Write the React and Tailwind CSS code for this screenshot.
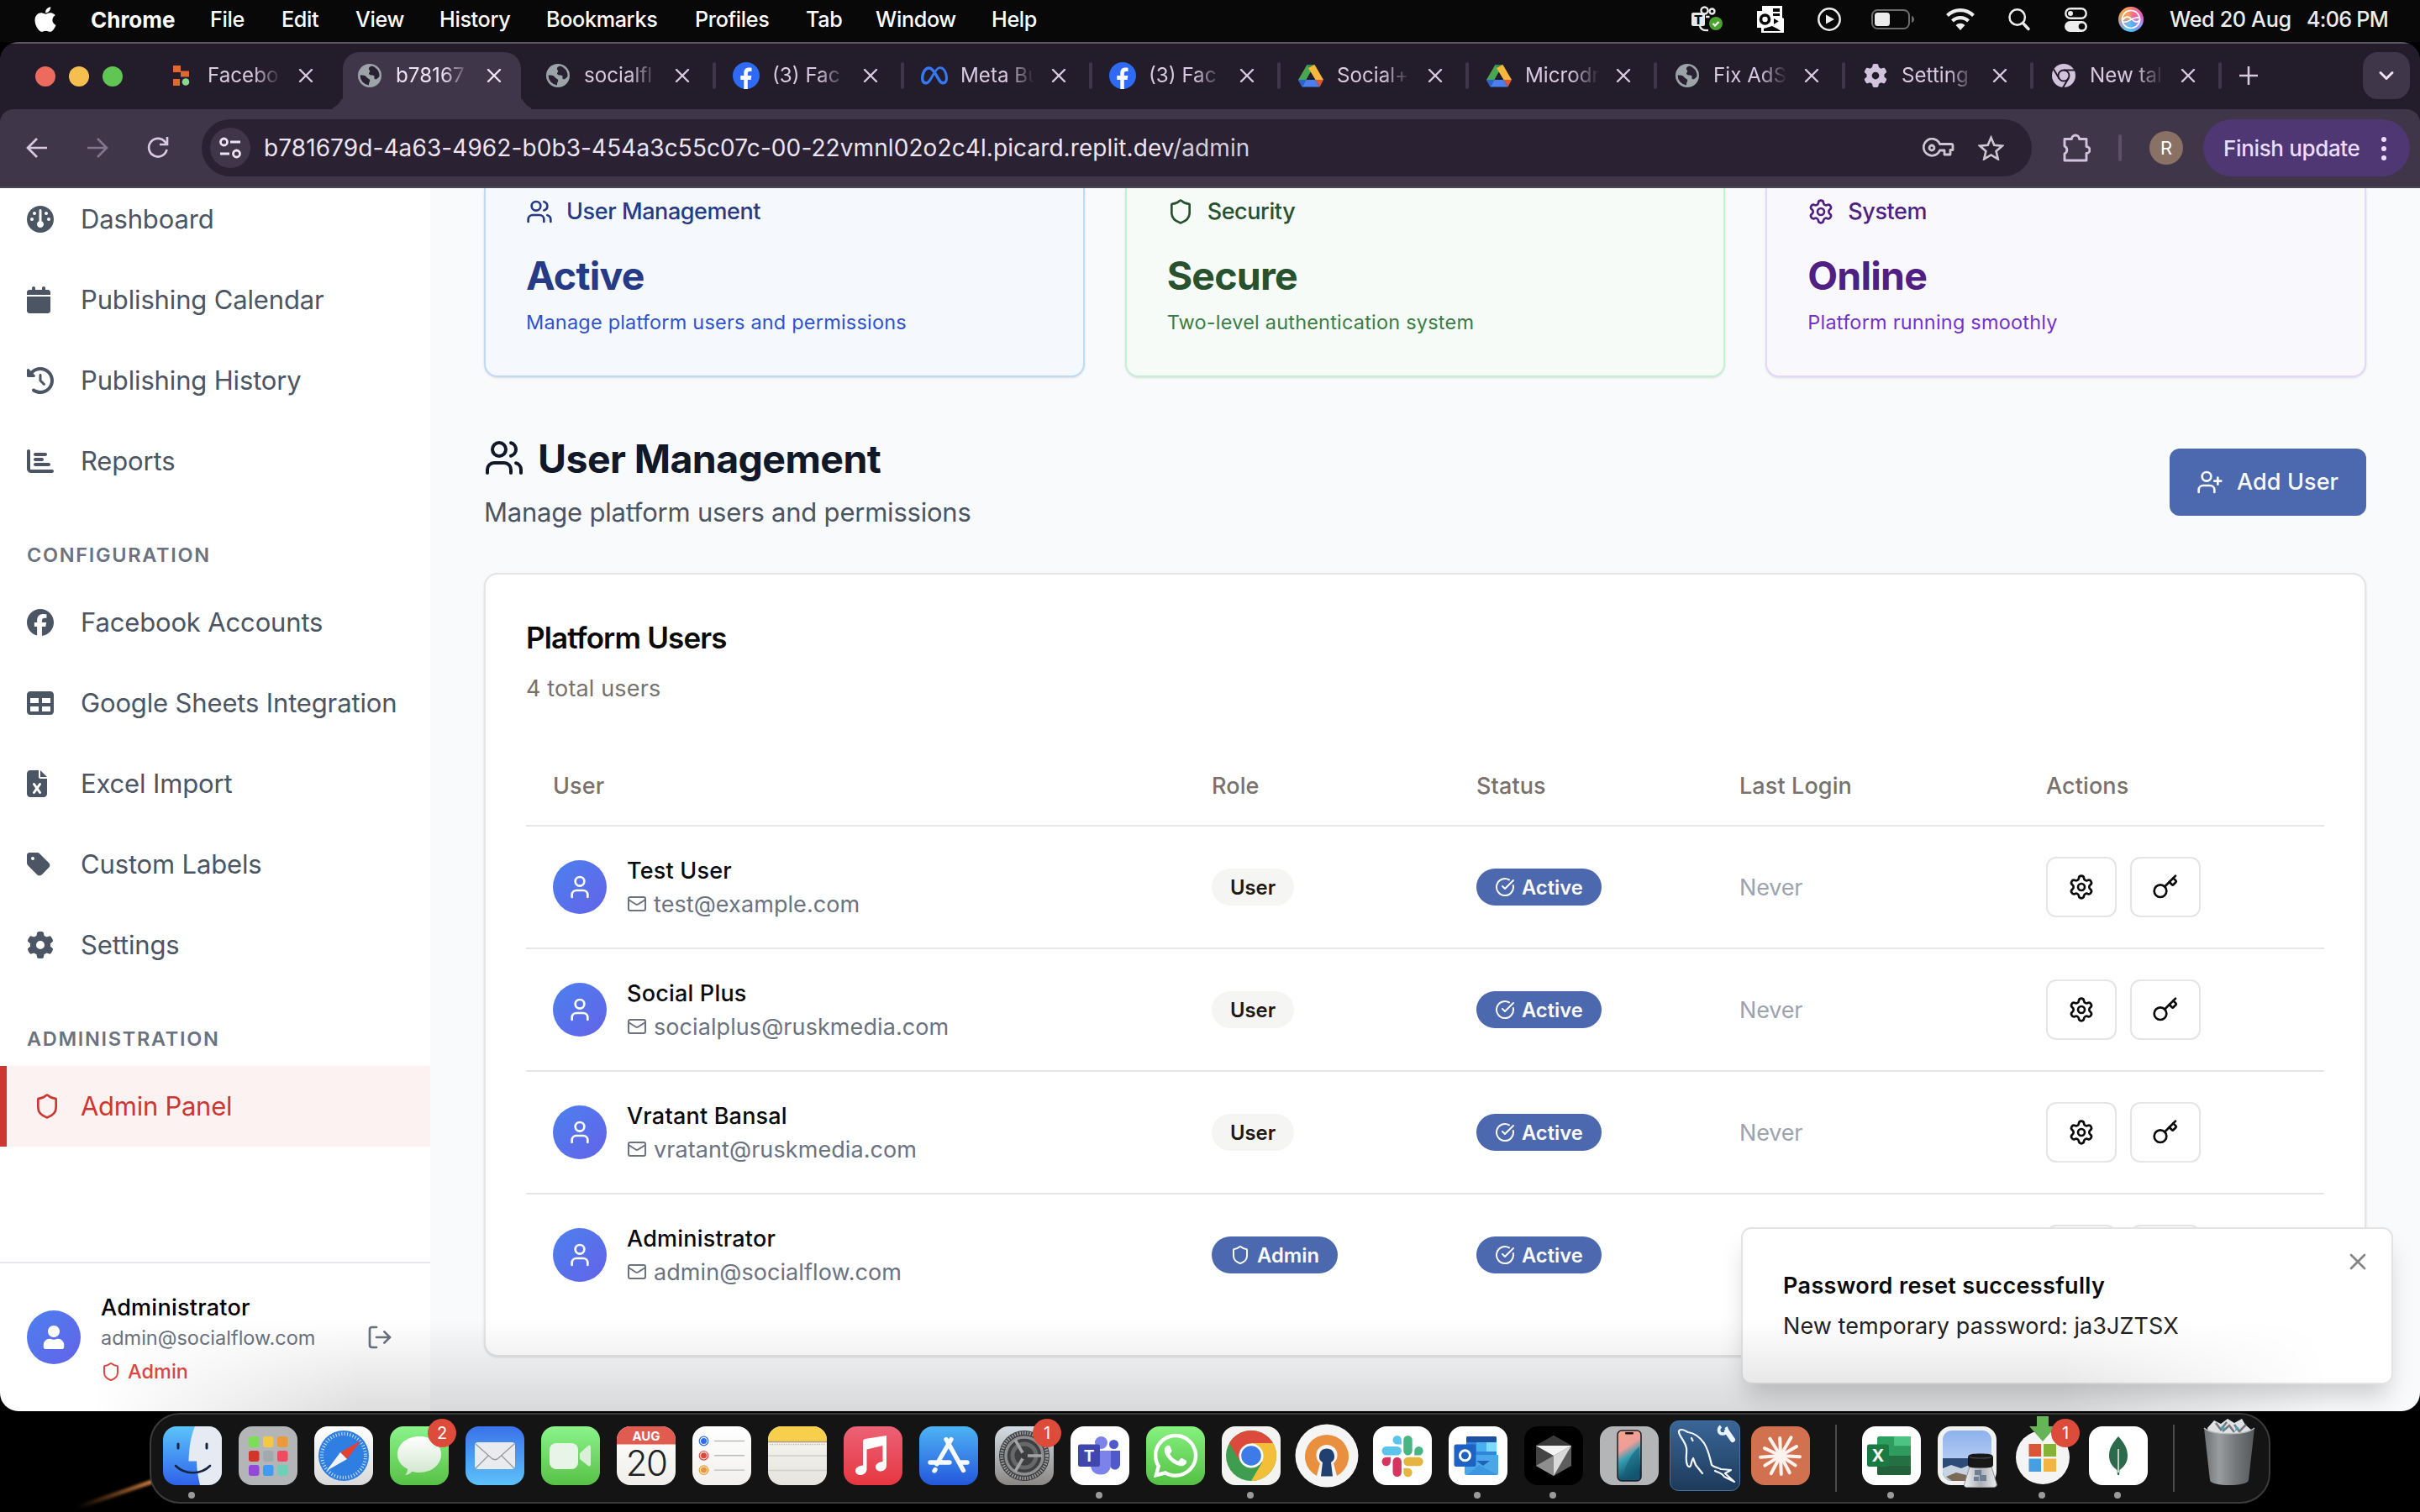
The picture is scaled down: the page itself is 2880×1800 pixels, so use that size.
import React from "react";
import { Users, Shield, Settings, UserPlus, User, Mail, CircleCheckBig, Key, LogOut, X, ChevronDown } from "lucide-react";
import { FaApple, FaGauge, FaCalendar, FaClockRotateLeft, FaChartBar, FaFacebook, FaTable, FaFileExcel, FaTag, FaGear, FaMeta } from "react-icons/fa6";
import { FaUser, FaWhatsapp } from "react-icons/fa";

/* ---------- menu bar ---------- */

const menus = [
  ["File", "w-[85px]"],
  ["Edit", "w-[88px]"],
  ["View", "w-[100px]"],
  ["History", "w-[127px]"],
  ["Bookmarks", "w-[177px]"],
  ["Profiles", "w-[132px]"],
  ["Tab", "w-[83px]"],
  ["Window", "w-[138px]"],
  ["Help", "w-[60px]"],
];

function MenuBar() {
  return (
    <header className="flex h-[50px] shrink-0 items-center bg-[#080808] pb-[3px] text-[25.2px] font-medium tracking-[-0.35px] text-white">
      <FaApple className="ml-[38px] mb-[2px] h-[34px] w-[32px]" />
      <span className="ml-[38px] w-[142px] text-[26px] font-bold tracking-normal">Chrome</span>
      {menus.map(([m, w]) => (
        <span key={m} className={`shrink-0 ${w}`}>{m}</span>
      ))}
      <div className="ml-auto flex items-center text-[#ececec]">
        <svg width="38" height="34" viewBox="0 0 38 34" className="mt-[2px]">
          <g fill="none" stroke="#e8e8e8" strokeWidth="2.4">
            <circle cx="15.5" cy="5.5" r="4" />
            <circle cx="24.5" cy="6.5" r="3" />
            <path d="M17 13h4.500M10 24c1 4 5 5.500 10 5" />
          </g>
          <rect y="8" width="16" height="16" rx="2" fill="#e8e8e8" />
          <text x="8" y="21.500" textAnchor="middle" fontSize="15" fontWeight="800" fill="#080808" fontFamily="Inter, sans-serif">T</text>
          <circle cx="29" cy="21" r="8" fill="#4aa22f" />
          <path d="M25.500 21l2.500 2.500 4.500-4.500" fill="none" stroke="#fff" strokeWidth="2.200" />
        </svg>
        <svg width="32" height="34" viewBox="0 0 32 34" className="ml-[40px]">
          <path d="M6 1h24v14l2 1v17H5V27H0V7h6z" fill="#fff" />
          <path d="M19 4h8v9h-8zM20 16l7 4-7 5zM8 28l10-3 12 6H8z" fill="#080808" />
          <path d="M19 9h9M20 24l11-7M21 24l10 8" stroke="#fff" strokeWidth="1.800" />
          <circle cx="9.500" cy="17" r="5" fill="none" stroke="#080808" strokeWidth="3.600" />
        </svg>
        <svg width="28" height="30" viewBox="0 0 28 30" className="ml-[40px]">
          <circle cx="14" cy="15" r="12.700" fill="none" stroke="#ececec" strokeWidth="2.500" />
          <path d="M10 9.500v11l10-5.500z" fill="#ececec" />
        </svg>
        <svg width="52" height="26" viewBox="0 0 52 26" className="ml-[36px]">
          <rect x="1" y="2" width="44" height="22" rx="6.500" fill="none" stroke="#6c6c6c" strokeWidth="2" />
          <rect x="4" y="5" width="18" height="16" rx="3.500" fill="#ececec" />
          <path d="M48 9c4 1 4 7 0 8z" fill="#6c6c6c" />
        </svg>
        <svg width="34" height="27" viewBox="0 0 34 27" className="ml-[37px]">
          <path d="M1.500 8.500a22 22 0 0 1 31 0M7.500 15a13.500 13.500 0 0 1 19 0" fill="none" stroke="#ececec" strokeWidth="4.200" />
          <path d="M11.500 20a8 8 0 0 1 11 0L17 26z" fill="#ececec" />
        </svg>
        <svg width="26" height="28" viewBox="0 0 26 28" className="ml-[40px]">
          <circle cx="10.700" cy="11.500" r="9.200" fill="none" stroke="#ececec" strokeWidth="2.500" />
          <path d="M17.500 18.500l6.500 7" stroke="#ececec" strokeWidth="3.400" strokeLinecap="round" />
        </svg>
        <svg width="27" height="30" viewBox="0 0 27 30" className="ml-[41px]">
          <rect x="1.300" y="2.300" width="24.400" height="11.400" rx="5.700" fill="none" stroke="#ececec" strokeWidth="2.400" />
          <circle cx="7" cy="8" r="3" fill="#ececec" />
          <rect x="0" y="17" width="27" height="13" rx="6.500" fill="#ececec" />
          <circle cx="20.500" cy="23.500" r="3.800" fill="#080808" />
        </svg>
        <div className="ml-[37px] flex size-[30px] items-center justify-center rounded-full bg-[conic-gradient(from_20deg,#f4708a,#e85cb0,#b48af8,#5aa8f5,#63c4f0,#a0a0c0,#f0a050,#f4a060,#f4708a)]">
          <svg width="26" height="26" viewBox="0 0 26 26" fill="none" stroke="#fff" strokeWidth="1.700">
            <circle cx="13" cy="13" r="10.500" />
            <path d="M3 14c4-6 8-4 11-1s7 5 10 0M4 16c6 2 9-6 19-5" />
          </svg>
        </div>
        <span className="ml-[31px] w-[163px]">Wed 20 Aug</span>
        <span className="mr-[37px] w-[98px] whitespace-nowrap tracking-[-0.75px]">4:06 PM</span>
      </div>
    </header>
  );
}

/* ---------- browser tabs ---------- */

function Globe() {
  return (
    <svg width="28" height="28" viewBox="0 0 28 28">
      <circle cx="14" cy="14" r="14" fill="#9ca3a9" />
      <path d="M15 3c-2 1-3 3-1 5 1 1.500-1 2-1 3.500s2 2 4 2 3 1 2.500 3 2 2.500 3.500 1c1-1 2-1.500 2.500-3a12 12 0 0 0-5-10C19 3 17 2.500 15 3zM2.500 13.500c3 0 6 0 7.500 2s3 2 4 3.500-1 3-1 4.500v2A12 12 0 0 1 2.500 13.500z" fill="#282131" />
    </svg>
  );
}
function Drive() {
  return (
    <svg width="30" height="27" viewBox="0 0 30 27">
      <path d="M10.500 0h9L10 17l-5.500 9L0 18z" fill="#4aa653" />
      <path d="M10.500 0h9L15 8z" fill="#2f8a45" />
      <path d="M19.500 0L30 18h-9.500L12 4z" fill="#f5b83d" />
      <path d="M9.500 18h11l5 8.500h-21z" fill="#4a80ee" />
      <path d="M0 18h9.500l-5 8.500z" fill="#2c62d6" />
      <path d="M20.500 18H30l-4.500 8.500z" fill="#e2553d" />
    </svg>
  );
}
function FacebookMark() {
  return (
    <svg width="32" height="32" viewBox="0 0 32 32">
      <circle cx="16" cy="16" r="16" fill="#2f6af5" />
      <path d="M13.300 32V21h-4v-5h4v-3c0-4.500 2.500-6.500 6-6.500 1.500 0 2.700.2 3.200.3v4.300h-2.200c-2 0-2.500 1-2.500 2.600V16h4.600l-.8 5h-3.800v11z" fill="#fff" />
    </svg>
  );
}
function ReplitMark() {
  return (
    <svg width="22" height="26" viewBox="0 0 22 26">
      <path d="M1 1h9v8H1zM10 7.500h10v7H10zM1 17h8v8H1z" fill="#e2682f" />
      <circle cx="16" cy="20.500" r="4.300" fill="#86d98f" />
    </svg>
  );
}
function ChromeMono() {
  return (
    <svg width="28" height="28" viewBox="0 0 28 28">
      <circle cx="14" cy="14" r="14" fill="#d0c3db" />
      <g fill="none" stroke="#231c2b" strokeWidth="2">
        <circle cx="14" cy="14" r="6.500" />
        <path d="M14 7.500h13M8.400 17.300L2 6.500M19.600 17.300L13 28.500" />
      </g>
    </svg>
  );
}
function GearMono() {
  return <FaGear className="size-[28px] text-[#d0c3db]" />;
}

const tabs = [
  ["Facebo", <ReplitMark />],
  ["b78167", <Globe />],
  ["socialfl", <Globe />],
  ["(3) Fac", <FacebookMark />],
  ["Meta Bu", <FaMeta className="size-[32px] text-[#3578f6]" />],
  ["(3) Fac", <FacebookMark />],
  ["Social+", <Drive />],
  ["Microdr", <Drive />],
  ["Fix AdS", <Globe />],
  ["Setting", <GearMono />],
  ["New tal", <ChromeMono />],
];

function TabStrip() {
  return (
    <div className="flex h-[80px] shrink-0 border-t-2 border-[#5b565f] bg-[#231c2b]">
      <div className="flex w-[178px] items-center gap-[16px] pl-[42px]">
        <span className="size-[24px] rounded-full bg-[#ec6a5e]" />
        <span className="size-[24px] rounded-full bg-[#f4bf4f]" />
        <span className="size-[24px] rounded-full bg-[#61c554]" />
      </div>
      {tabs.map(([title, icon], i) => {
        const active = i === 1;
        return (
          <div key={i} className="relative flex w-[224px] pt-[10px]">
            <div className={`relative ml-[6px] flex w-[212px] items-center rounded-t-[20px] pb-[12px] ${active ? "bg-[#403649]" : ""}`}>
              {active && (
                <>
                  <span className="absolute bottom-0 -left-[20px] size-[20px] rounded-br-[20px] shadow-[8px_8px_0_0_#403649] [clip-path:inset(0)]" />
                  <span className="absolute bottom-0 -right-[20px] size-[20px] rounded-bl-[20px] shadow-[-8px_8px_0_0_#403649] [clip-path:inset(0)]" />
                </>
              )}
              <span className="ml-[14px] flex w-[36px] shrink-0 items-center justify-center">{icon}</span>
              <span className={`ml-[13px] w-[92px] shrink-0 text-[24.2px] whitespace-nowrap [mask-image:linear-gradient(to_right,black_60%,transparent_96%)] ${active ? "text-[#ece4f2]" : "text-[#d6c9e0]"}`}>{title}</span>
              <X className={`ml-[11px] size-[28px] shrink-0 ${active ? "text-[#ece4f2]" : "text-[#d6c9e0]"}`} strokeWidth={2.1} />
            </div>
            {i >= 2 && <span className="absolute top-[22px] -right-[2px] h-[32px] w-[4px] rounded-full bg-[#40364a]" />}
          </div>
        );
      })}
      <svg className="mt-[26px] ml-[22px]" width="24" height="24" viewBox="0 0 24 24" stroke="#d6c9e0" strokeWidth="2.600">
        <path d="M12 1v22M1 12h22" />
      </svg>
      <span className="mt-[10px] mr-[12px] ml-auto flex h-[56px] w-[56px] items-center justify-center rounded-[18px] bg-[#403649] text-[#ece4f2]">
        <ChevronDown className="size-[28px]" strokeWidth={2.6} />
      </span>
    </div>
  );
}

/* ---------- address bar ---------- */

function Toolbar() {
  return (
    <div className="flex h-[94px] shrink-0 items-center rounded-t-[16px] border-b-2 border-[#4a4650] bg-[#403649] text-[#d6c9e0]">
      <svg className="ml-[31px]" width="26" height="26" viewBox="0 0 26 26" fill="none" stroke="currentColor" strokeWidth="2.700">
        <path d="M25 13H3M13 2L2 13l11 11" />
      </svg>
      <svg className="ml-[46px] text-[#81768c]" width="26" height="26" viewBox="0 0 26 26" fill="none" stroke="currentColor" strokeWidth="2.700">
        <path d="M1 13h22M13 2l11 11-11 11" />
      </svg>
      <svg className="ml-[46px]" width="26" height="26" viewBox="0 0 26 26" fill="none" stroke="currentColor" strokeWidth="2.700">
        <path d="M23.500 15A10.800 10.800 0 1 1 21 5.500l2 2.500M24 0v9h-9" />
      </svg>
      <div className="ml-[39px] flex h-[68px] w-[2178px] items-center rounded-full bg-[#2a2133]">
        <span className="ml-[10px] flex size-[48px] items-center justify-center rounded-full bg-[#403649]">
          <svg width="26" height="26" viewBox="0 0 26 26" fill="none" stroke="#ece4f2" strokeWidth="2.800">
            <circle cx="5.500" cy="6" r="4" />
            <path d="M13 6h12M1 20h11" />
            <circle cx="20.500" cy="20" r="4" />
          </svg>
        </span>
        <span className="ml-[16px] text-[28px] tracking-[0.09px] whitespace-nowrap text-[#ece4f2]">
          b781679d-4a63-4962-b0b3-454a3c55c07c-00-22vmnl02o2c4l.picard.replit.dev<span className="text-[#d6cdda]">/admin</span>
        </span>
        <svg className="ml-auto" width="38" height="24" viewBox="0 0 38 24" fill="none" stroke="#cdc6d1" strokeWidth="2.800" strokeLinejoin="round">
          <path d="M20.500 7.500H34a2 2 0 0 1 2 2v5h-3v5.500h-7V15h-5.500A10 10 0 1 1 20.500 7.500z" />
          <circle cx="11" cy="12" r="3" />
        </svg>
        <svg className="mr-[33px] ml-[28px]" width="31" height="30" viewBox="0 0 31 30" fill="none" stroke="#cdc6d1" strokeWidth="2.600">
          <path d="M15.500 2.800l3.800 8.900 9.600.9-7.300 6.400 2.200 9.400-8.300-5-8.300 5 2.200-9.400-7.300-6.400 9.600-.9z" />
        </svg>
      </div>
      <svg className="ml-[36px]" width="34" height="34" viewBox="0 0 34 34" fill="none" stroke="#d0c3db" strokeWidth="2.900" strokeLinejoin="round">
        <path d="M3 6.500h8.500a4.500 4.500 0 0 1 9 0H29v9a4 4 0 0 1 0 8v8.500H3v-8a5 5 0 0 0 0-9z" />
      </svg>
      <span className="ml-[33px] h-[32px] w-[4px] rounded-full bg-[#5b5065]" />
      <span className="ml-[33px] flex size-[40px] items-center justify-center rounded-full bg-[#8a7165] text-[22px] text-white">R</span>
      <span className="ml-[24px] flex h-[68px] w-[246px] items-center rounded-full bg-[#4f3773] pl-[24px] text-[26px] font-medium tracking-[-0.35px] whitespace-nowrap text-[#ecdcff]">
        Finish update
        <span className="mt-[1px] ml-auto mr-[28px] flex flex-col gap-[5px]">
          <i className="size-[6px] rounded-full bg-[#ecdcff]" />
          <i className="size-[6px] rounded-full bg-[#ecdcff]" />
          <i className="size-[6px] rounded-full bg-[#ecdcff]" />
        </span>
      </span>
    </div>
  );
}

/* ---------- sidebar ---------- */

function NavItem({ icon: Icon, label }) {
  return (
    <a className="flex h-[96px] items-center pl-[32px] text-[31px] tracking-[-0.15px] text-[#4b5563]">
      <Icon className="mr-[32px] size-[32px]" preserveAspectRatio="xMinYMid meet" />
      {label}
    </a>
  );
}
function NavHeading({ children }) {
  return <h3 className="mt-[48px] mb-[16px] pl-[32px] text-[23.500px] leading-[32px] font-semibold tracking-[1.7px] text-[#6b7280]">{children}</h3>;
}

function Sidebar() {
  return (
    <aside className="flex w-[512px] shrink-0 flex-col bg-white">
      <nav className="-mt-[11px]">
        <NavItem icon={FaGauge} label="Dashboard" />
        <NavItem icon={FaCalendar} label="Publishing Calendar" />
        <NavItem icon={FaClockRotateLeft} label="Publishing History" />
        <NavItem icon={FaChartBar} label="Reports" />
        <NavHeading>CONFIGURATION</NavHeading>
        <NavItem icon={FaFacebook} label="Facebook Accounts" />
        <NavItem icon={FaTable} label="Google Sheets Integration" />
        <NavItem icon={FaFileExcel} label="Excel Import" />
        <NavItem icon={FaTag} label="Custom Labels" />
        <NavItem icon={FaGear} label="Settings" />
        <NavHeading>ADMINISTRATION</NavHeading>
        <a className="flex h-[96px] items-center border-l-8 border-[#cc3731] bg-[#fcf2f1] pl-[32px] text-[31px] tracking-[-0.27px] text-[#cc3731]">
          <Shield className="mr-[24px] size-[32px]" />
          Admin Panel
        </a>
      </nav>
      <div className="mt-auto flex h-[178px] items-center border-t-2 border-[#e5e7eb] pl-[32px]">
        <span className="flex size-[64px] items-center justify-center rounded-full bg-linear-to-br from-[#4a80ee] to-[#6262e8] text-white">
          <FaUser className="h-[28px] w-auto" />
        </span>
        <div className="mt-[2px] ml-[24px] w-[290px]">
          <div className="text-[27px] leading-[40px] font-medium tracking-[0.25px] text-black">Administrator</div>
          <div className="text-[23.500px] leading-[32px] text-[#6b7280]">admin@socialflow.com</div>
          <div className="mt-[8px] flex items-center text-[23.500px] leading-[32px] font-medium text-[#dc4a44]">
            <Shield className="mr-[8px] size-[24px]" />
            Admin
          </div>
        </div>
        <LogOut className="ml-[26px] size-[32px] text-[#6b7280]" />
      </div>
    </aside>
  );
}

/* ---------- main panel ---------- */

const stats = [
  { icon: Users, label: "User Management", value: "Active", note: "Manage platform users and permissions", card: "border-[#bfd9fb] bg-[#f5f9fe]", head: "text-[#273a86]", text: "text-[#2f52d0]" },
  { icon: Shield, label: "Security", value: "Secure", note: "Two-level authentication system", card: "border-[#c3f3d0] bg-[#f6fbf8]", head: "text-[#28522f]", text: "text-[#3b7d45]" },
  { icon: Settings, label: "System", value: "Online", note: "Platform running smoothly", card: "border-[#e5d6fb] bg-[#f9f9fd]", head: "text-[#501f83]", text: "text-[#7531cc]" },
];

const rows = [
  ["Test User", "test@example.com", false],
  ["Social Plus", "socialplus@ruskmedia.com", false],
  ["Vratant Bansal", "vratant@ruskmedia.com", false],
  ["Administrator", "admin@socialflow.com", true],
];

const columns = "grid grid-cols-[784px_315px_313px_365px_331px] items-center pl-[32px]";

function ActionButton({ icon: Icon }) {
  return (
    <button className="flex h-[72px] w-[84px] items-center justify-center rounded-[12px] border-2 border-[#e5e5e5] bg-white text-[#0a0a0a]">
      <Icon className="size-[32px]" />
    </button>
  );
}

function Main() {
  return (
    <main className="flex-1 bg-[#f9fafc] px-[64px]">
      <section className="grid grid-cols-3 gap-[48px]">
        {stats.map(({ icon: Icon, ...s }) => (
          <div key={s.label} className={`rounded-b-[16px] border-2 border-t-0 px-[48px] pt-[12px] pb-[47px] shadow-sm ${s.card}`}>
            <div className={`flex h-[32px] items-center gap-[16px] text-[27px] font-medium tracking-[-0.42px] ${s.head}`}>
              <Icon className="size-[32px]" />
              {s.label}
            </div>
            <div className={`mt-[28px] text-[46.500px] leading-[64px] font-bold tracking-[-0.8px] ${s.head}`}>{s.value}</div>
            <div className={`mt-[8px] text-[23.500px] leading-[32px] tracking-[0.2px] ${s.text}`}>{s.note}</div>
          </div>
        ))}
      </section>

      <section className="mt-[64px] flex items-center justify-between">
        <div className="pt-[1px]">
          <h2 className="flex items-center gap-[16px] text-[46.500px] leading-[64px] font-bold tracking-[-0.6px] text-[#111827]">
            <Users className="mb-[2px] size-[48px]" strokeWidth={2} />
            User Management
          </h2>
          <p className="mt-[8px] text-[31px] leading-[48px] tracking-[-0.22px] text-[#4b5563]">Manage platform users and permissions</p>
        </div>
        <button className="flex h-[80px] w-[234px] items-center rounded-[12px] bg-[#4c68af] pl-[32px] text-[27px] font-medium tracking-[0.1px] text-[#fafafa]">
          <UserPlus className="mr-[16px] size-[32px]" />
          <span className="mt-[1px]">Add User</span>
        </button>
      </section>

      <section className="mt-[48px] h-[933px] rounded-[16px] border-2 border-[#e6e4e4] bg-white px-[48px] pt-[47px] shadow-sm">
        <h3 className="text-[35px] leading-[56px] font-semibold tracking-[-0.85px] text-[#0c0a09]">Platform Users</h3>
        <p className="mt-[13px] text-[27px] leading-[40px] tracking-[0.15px] text-[#78716c]">4 total users</p>
        <div className="mt-[48px]">
          <div className={`h-[96px] border-b-2 border-[#e5e5e5] pt-[2px] text-[27px] font-medium tracking-[0.1px] text-[#78716c] ${columns}`}>
            <span>User</span>
            <span>Role</span>
            <span>Status</span>
            <span>Last Login</span>
            <span>Actions</span>
          </div>
          {rows.map(([name, email, admin]) => (
            <div key={name} className={`h-[146px] border-b-2 border-[#e5e5e5] last:h-[144px] last:border-b-0 ${columns}`}>
              <div className="flex items-center">
                <span className="flex size-[64px] items-center justify-center rounded-full bg-linear-to-br from-[#4a80ee] to-[#6262e8] text-white">
                  <User className="size-[32px]" />
                </span>
                <div className="mt-[2px] ml-[24px]">
                  <div className="text-[27px] leading-[40px] font-medium tracking-[0.2px] text-[#0a0a0a]">{name}</div>
                  <div className="flex items-center gap-[8px] text-[27px] leading-[40px] tracking-[0.08px] text-[#6b7280]">
                    <Mail className="mb-[2px] size-[24px]" />
                    {email}
                  </div>
                </div>
              </div>
              <div className="flex">
                {admin ? (
                  <span className="flex h-[44px] items-center gap-[8px] rounded-full bg-[#4c68af] px-[22px] text-[23.800px] font-semibold text-[#fafafa]">
                    <Shield className="size-[24px]" />
                    <span className="mt-[1px]">Admin</span>
                  </span>
                ) : (
                  <span className="flex h-[44px] items-center rounded-full bg-[#f5f5f4] px-[22px] pt-[1px] text-[23.800px] font-semibold text-[#1c1917]">User</span>
                )}
              </div>
              <div className="flex">
                <span className="flex h-[44px] items-center gap-[8px] rounded-full bg-[#4c68af] px-[22px] text-[23.700px] font-semibold text-[#fafafa]">
                  <CircleCheckBig className="size-[24px]" />
                  <span className="mt-[1px]">Active</span>
                </span>
              </div>
              <span className="mt-[2px] text-[27px] tracking-[-0.15px] text-[#9ca3af]">Never</span>
              <div className="flex gap-[16px]">
                <ActionButton icon={Settings} />
                <ActionButton icon={Key} />
              </div>
            </div>
          ))}
        </div>
      </section>
    </main>
  );
}

function Toast() {
  return (
    <div className="absolute right-[32px] bottom-[32px] h-[187px] w-[776px] rounded-[12px] border-2 border-[#e5e4e3] bg-white pt-[48px] pl-[48px] shadow-[0_20px_30px_-6px_rgba(0,0,0,0.18)]">
      <X className="absolute top-[23px] right-[24px] size-[32px] text-[#858585]" />
      <div className="text-[27px] leading-[40px] font-semibold tracking-[0.35px] text-[#0a0a0a]">Password reset successfully</div>
      <div className="mt-[8px] text-[27px] leading-[40px] tracking-[0.08px] text-[#232323]">New temporary password: ja3JZTSX</div>
    </div>
  );
}

/* ---------- dock ---------- */

function Tile({ fill, stroke, children, id }) {
  return (
    <svg width="70" height="70" viewBox="0 0 70 70" className="overflow-visible">
      {Array.isArray(fill) && (
        <defs>
          <linearGradient id={id} x1="0" y1="0" x2="0" y2="1">
            <stop offset="0" stopColor={fill[0]} />
            <stop offset="1" stopColor={fill[1]} />
          </linearGradient>
          <clipPath id={id + "c"}><rect width="70" height="70" rx="16" /></clipPath>
        </defs>
      )}
      <rect width="70" height="70" rx="16" fill={Array.isArray(fill) ? `url(#${id})` : fill} stroke={stroke} />
      {children}
    </svg>
  );
}

const Finder = () => (
  <Tile id="fd" fill={["#5cc4fa", "#2f62ea"]}>
    <path clipPath="url(#fdc)" d="M38 0h32v70H44c-2-9-4-18-4-28.500h-9.500C31 25 33 12 38 0z" fill="#e6ebf3" />
    <path d="M18 21v5M52 21v5" stroke="#14263f" strokeWidth="3" strokeLinecap="round" />
    <path d="M15 47c11 11 30 11 41 0" fill="none" stroke="#14263f" strokeWidth="2.600" strokeLinecap="round" />
  </Tile>
);
const Launchpad = () => (
  <Tile fill="#b4b5b6">
    {["#7ddc58", "#f4c845", "#ea9a3a", "#d2352c", "#a3a8ac", "#ee4d60", "#9448d8", "#3f9bf4", "#6fd0b8"].map((c, i) => (
      <rect key={i} x={12 + (i % 3) * 17} y={12 + Math.floor(i / 3) * 17} width="12.500" height="13" rx="3" fill={c} />
    ))}
  </Tile>
);
const Safari = () => (
  <Tile id="sf" fill={["#ffffff", "#d9d9d9"]}>
    <circle cx="35" cy="35" r="30" fill="#2f7fe3" />
    <circle cx="35" cy="35" r="26" fill="none" stroke="#d4e8fb" strokeWidth="4" strokeDasharray="1 2.400" />
    <path d="M55.500 17L31 31l8 8z" fill="#e8402e" />
    <path d="M14.500 53L31 31l8 8z" fill="#f3f4f6" />
  </Tile>
);
const Messages = () => (
  <Tile id="ms" fill={["#8bf38b", "#57c146"]}>
    <defs>
      <linearGradient id="msb" x1="0" y1="0" x2="0" y2="1">
        <stop offset="0" stopColor="#ffffff" />
        <stop offset="1" stopColor="#cfe6cb" />
      </linearGradient>
    </defs>
    <path d="M35 12c15 0 26 9.500 26 21.500S50 55 35 55c-3 0-6-.4-8.500-1.200C24 56.500 21.500 58 18 58c2-2 3.200-4.500 3-7.200C13.500 47 9 41 9 33.500 9 21.500 20 12 35 12z" fill="url(#msb)" />
  </Tile>
);
const MailApp = () => (
  <Tile id="ml" fill={["#3a72ea", "#5cc2fa"]}>
    <rect x="11" y="19" width="48" height="32" rx="4" fill="#e9ebee" />
    <path d="M12 21l19 17c3 2.500 5 2.500 8 0l19-17M12 50l15-15M58 50L43 35" fill="none" stroke="#9b9b9b" strokeWidth="1.400" />
  </Tile>
);
const FaceTime = () => (
  <Tile id="ft" fill={["#8bf38b", "#57c146"]}>
    <rect x="10" y="20" width="34" height="31" rx="8" fill="#e9f4e8" />
    <path d="M46 32l10-9c2-1 3 0 3 2v20c0 2-1 3-3 2l-10-8z" fill="#d9efd6" />
  </Tile>
);
const CalendarApp = () => (
  <Tile id="cl" fill={["#ffffff", "#efeeea"]}>
    <path d="M0 21.500V16A16 16 0 0 1 16 0h38a16 16 0 0 1 16 16v5.500z" fill="#e05c50" />
    <text x="35" y="17" textAnchor="middle" fontSize="15" fontWeight="700" fill="#fff" fontFamily="Inter, sans-serif">AUG</text>
    <text x="35" y="59" textAnchor="middle" fontSize="42" fontWeight="300" letterSpacing="-1.500" fill="#222" fontFamily="Inter, sans-serif">20</text>
  </Tile>
);
const Reminders = () => (
  <Tile id="rm" fill={["#ffffff", "#f1f0ee"]}>
    {["#2f6bea", "#e0453a", "#eb9633"].map((c, i) => (
      <g key={c}>
        <circle cx="13.500" cy={17.500 + i * 17.300} r="3.500" fill={c} />
        <circle cx="13.500" cy={17.500 + i * 17.300} r="5.300" fill="none" stroke={c} strokeWidth="1.200" />
        <path d={`M26 ${17.500 + i * 17.300}h36`} stroke="#bcbcbc" strokeWidth="1.400" />
      </g>
    ))}
  </Tile>
);
const Notes = () => (
  <Tile id="nt" fill={["#f8f7f3", "#e6e4dd"]}>
    <path d="M0 18V16A16 16 0 0 1 16 0h38a16 16 0 0 1 16 16v2z" fill="#f7cf4d" />
    <path d="M0 18.500h70" stroke="#a79c80" strokeWidth="1.500" />
    <path d="M2 21.500h66" stroke="#b5b2aa" strokeWidth="1.400" strokeDasharray="1.200 1.600" />
    <path d="M0 35h70M0 52.500h70" stroke="#d2d0ca" strokeWidth="1.600" />
  </Tile>
);
const Music = () => (
  <Tile id="mu" fill={["#ec6276", "#e63640"]}>
    <path d="M51 11v35.500c0 4-3 7-7 7s-6-2.500-6-5c0-3.500 3.500-6 8.500-6.500V23l-19 4.500V51c0 4-3.500 7-7.500 7s-6-2.500-6-5c0-3.500 3.500-6 9-6.500V18c0-1.600.8-2.600 2.500-3z" fill="#fff" />
  </Tile>
);
const AppStore = () => (
  <Tile id="as" fill={["#4db3f4", "#2457dc"]}>
    <g stroke="#f6f9fd" strokeWidth="5.400" strokeLinecap="round">
      <path d="M38 15.500L21 45M32 15.500l20.500 37M18 53l1-1.500M13 43h23M49 43h8" />
    </g>
  </Tile>
);
const SettingsApp = () => (
  <Tile id="st" fill={["#d3dde5", "#8b8784"]}>
    <circle cx="35" cy="35" r="30" fill="#3d3f41" />
    <circle cx="35" cy="35" r="27" fill="none" stroke="#9a9c9e" strokeWidth="4" strokeDasharray="1.600 1.500" />
    <circle cx="35" cy="35" r="22" fill="none" stroke="#8d8f91" strokeWidth="3.500" />
    <circle cx="35" cy="35" r="14" fill="none" stroke="#66686a" strokeWidth="5" />
    <path d="M35 35h21M35 35L24 16M35 35L24 54" stroke="#a2a4a6" strokeWidth="3.500" />
    <circle cx="35" cy="35" r="4" fill="#3a3c3e" />
  </Tile>
);
const Teams = () => (
  <Tile fill="#fff">
    <circle cx="36.500" cy="19.500" r="7.500" fill="#7b83eb" />
    <circle cx="51.500" cy="21.500" r="5.500" fill="#5059c9" />
    <path d="M47 29h12v16c0 4-3 6.500-6 6.500s-6-2-6-6z" fill="#5059c9" />
    <path d="M24 29h24v16c0 8-5 12.500-12 12.500S24 53 24 46z" fill="#7b83eb" />
    <rect x="9" y="21.500" width="26" height="26.500" rx="2.500" fill="#4047ac" />
    <text x="22" y="41.500" textAnchor="middle" fontSize="19" fontWeight="700" fill="#fff" fontFamily="Inter, sans-serif">T</text>
  </Tile>
);
const WhatsApp = () => (
  <Tile id="wa" fill={["#86f27f", "#54c045"]}>
    <FaWhatsapp x="5" y="5" size={60} color="#fff" />
  </Tile>
);
const Chrome = () => (
  <Tile fill="#f3f3f2">
    <circle cx="35" cy="35" r="30" fill="#3f9d4f" />
    <path d="M35 35L9 20a30 30 0 0 1 52 0z" fill="#db4a3b" />
    <path d="M35 20h26a30 30 0 0 1-26 45l13-22z" fill="#f4bf38" />
    <path d="M9 20l13 22.500L35 35z" fill="#db4a3b" />
    <circle cx="35" cy="35" r="14.500" fill="#fff" />
    <circle cx="35" cy="35" r="11.800" fill="#3c7be8" />
  </Tile>
);
const OpenVpn = () => (
  <svg width="76" height="76" viewBox="0 0 76 76">
    <circle cx="38" cy="38" r="37.500" fill="#f5f5f5" />
    <path d="M26 62A26 26 0 1 1 50 62L46 47a12.500 12.500 0 1 0-16 0z" fill="#ea8f3d" />
    <path d="M38 29.500a9 9 0 0 1 5 16.500l2 16.500H31L33 46a9 9 0 0 1 5-16.500z" fill="#213f6f" />
  </svg>
);
const Slack = () => (
  <Tile fill="#fff">
    <g transform="translate(10.500 11) scale(.2)">
      <path d="M52 155a26 26 0 1 1-26-26h26zM65 155a26 26 0 0 1 52 0v64a26 26 0 0 1-52 0z" fill="#d63560" />
      <path d="M91 52a26 26 0 1 1 26-26v26zM91 65a26 26 0 0 1 0 52H26a26 26 0 0 1 0-52z" fill="#5cc3ec" />
      <path d="M194 91a26 26 0 1 1 26 26h-26zM181 91a26 26 0 0 1-52 0V26a26 26 0 0 1 52 0z" fill="#48b583" />
      <path d="M155 194a26 26 0 1 1-26 26v-26zM155 181a26 26 0 0 1 0-52h65a26 26 0 0 1 0 52z" fill="#e6b540" />
    </g>
  </Tile>
);
const Outlook = () => (
  <Tile fill="#fff">
    <rect x="21" y="12" width="36" height="40" rx="2" fill="#2f86d8" />
    <rect x="21" y="12" width="36" height="7" rx="2" fill="#1d50a0" />
    <rect x="33" y="19" width="12" height="11" fill="#48b0ee" />
    <rect x="45" y="19" width="12" height="11" fill="#7bdcff" />
    <path d="M19 34h40v22a2 2 0 0 1-2 2H21a2 2 0 0 1-2-2z" fill="#4aa8ea" />
    <path d="M33 41h16l-8 6z" fill="#1f63b8" />
    <path d="M36 46l23 12H22z" fill="#3c96e0" />
    <rect x="6.500" y="21.500" width="26" height="26.500" rx="2.500" fill="#1e63c4" />
    <circle cx="19.500" cy="34.700" r="6" fill="none" stroke="#fff" strokeWidth="3" />
  </Tile>
);
const Cursor = () => (
  <Tile fill="#000">
    <path d="M35 11l21 12v24L35 59 14 47V23z" fill="#5d5d5d" />
    <path d="M35 11l21 12H14z" fill="#3a3a3a" />
    <path d="M14 23l21 12-21 12z" fill="#444" />
    <path d="M14 47l21-12v24z" fill="#8e8e8e" />
    <path d="M14 23h42L35 35z" fill="#f4f4f4" />
    <path d="M56 23L35 59V35z" fill="#d9d9d9" />
  </Tile>
);
const IPhone = () => (
  <Tile fill="#b3b5b6">
    <defs>
      <linearGradient id="ip" x1="0" y1="0" x2="0.300" y2="1">
        <stop offset="0" stopColor="#f0a58e" />
        <stop offset=".4" stopColor="#ef9d98" />
        <stop offset=".6" stopColor="#35a0b4" />
        <stop offset="1" stopColor="#0f4560" />
      </linearGradient>
    </defs>
    <rect x="21" y="5" width="28" height="60" rx="5" fill="url(#ip)" stroke="#1e1e20" strokeWidth="1.500" />
    <path d="M47 24C36 34 30 46 27 64h20z" fill="#16617c" opacity=".6" />
    <rect x="30" y="7" width="10" height="2.600" rx="1.300" fill="#111" />
  </Tile>
);
const MySql = () => (
  <svg width="84" height="84" viewBox="0 0 84 84">
    <defs>
      <linearGradient id="mq" x1="0" y1="0" x2="0" y2="1">
        <stop offset="0" stopColor="#3a6698" />
        <stop offset="1" stopColor="#1d3a5a" />
      </linearGradient>
    </defs>
    <rect x=".5" y=".5" width="83" height="83" rx="10" fill="url(#mq)" stroke="#4474a8" />
    <path d="M12 17c-2-4-1-6 2-6 4 0 5 2 8 3 7 1 14 6 19 13 5 8 7 17 9 26 3 3 7 3 11 5l12 1-7 4 11 10-12-6c-3-5-8-5-11-7M12 17c3 6 7 10 8 16 1 7-2 13 1 20 1 2 3 3 4 1 1-3 1-6 3-9l3 8 8 10M26 21l1.500 3" fill="none" stroke="#f3f7fb" strokeWidth="2.200" strokeLinejoin="round" strokeLinecap="round" />
    <path d="M68 13l7 10" stroke="#eaf4fc" strokeWidth="6" strokeLinecap="round" />
    <path d="M61 7c-4 3-3 9 2 9s7-4 4-8" fill="none" stroke="#eaf4fc" strokeWidth="3.600" />
  </svg>
);
const Claude = () => (
  <Tile fill="#d2714f">
    <g stroke="#fdf3ee" strokeWidth="4" strokeLinecap="round">
      {[3, 33, 62, 88, 118, 148, 176, 205, 238, 268, 300, 330].map((a, i) => (
        <path key={a} d={`M35 35h${[23, 21, 23, 22, 24, 22, 24, 21, 24, 21, 25, 22][i]}`} transform={`rotate(${a} 35 35)`} />
      ))}
    </g>
  </Tile>
);
const Excel = () => (
  <Tile fill="#fff">
    <rect x="18" y="12" width="40" height="46" rx="2.500" fill="#2e9e5f" />
    <rect x="38" y="12" width="20" height="11.500" fill="#4cc283" />
    <rect x="38" y="23.500" width="20" height="11.500" fill="#2f9a5d" />
    <rect x="18" y="35" width="40" height="11.500" fill="#247043" />
    <rect x="18" y="46.500" width="40" height="11.500" rx="2" fill="#22613a" />
    <rect x="6" y="21.500" width="26" height="26.500" rx="2.500" fill="#1b7a41" />
    <text x="19" y="42" textAnchor="middle" fontSize="20" fontWeight="700" fill="#fff" fontFamily="Inter, sans-serif">X</text>
  </Tile>
);
const Preview = () => (
  <Tile fill="#f1f1ef">
    <defs>
      <linearGradient id="pv" x1="0" y1="0" x2="0" y2="1">
        <stop offset="0" stopColor="#8cb2ee" />
        <stop offset="1" stopColor="#cfdcf4" />
      </linearGradient>
      <linearGradient id="pvg" x1="0" y1="0" x2="1" y2="0">
        <stop offset="0" stopColor="#f2f3f4" />
        <stop offset=".5" stopColor="#a9aeb4" />
        <stop offset="1" stopColor="#eceef0" />
      </linearGradient>
    </defs>
    <rect x="6" y="5" width="58" height="60" rx="11" fill="url(#pv)" />
    <path d="M6 38h58v16a11 11 0 0 1-11 11H17A11 11 0 0 1 6 54z" fill="#2c4b78" />
    <path d="M6 50l10-4 12 4 12-5v20H17A11 11 0 0 1 6 54z" fill="#c7d3e0" />
    <path d="M10 60l12-5 12 3v7H17z" fill="#7b6a55" />
    <path d="M38 48h26l6 20c1 3-1 4.500-4 4.500H35c-3 0-4-1.500-3-4.500z" fill="url(#pvg)" stroke="#8f9296" />
    <path d="M44 52h8v6h-8zM50 58h8v7h-8zM43 60h6v5h-6z" fill="#6f7f93" />
    <path d="M36 37c0-4 6-4.500 15-4.500s15 .5 15 4.500v9c0 3-5 3.500-15 3.500S36 49 36 46z" fill="#171717" />
    <path d="M38 36.500c4 2 22 2 26 0" fill="none" stroke="#4b4b4b" strokeWidth="1.200" />
  </Tile>
);
const Installer = () => (
  <svg width="70" height="84" viewBox="0 0 70 84" className="-mt-[12px]">
    <circle cx="35" cy="50" r="32" fill="#f4f4f4" />
    <path d="M18.500 34H33v15H18.500z" fill="#dd5538" />
    <path d="M36 34h15v15H36z" fill="#85b435" />
    <path d="M18.500 51.500H33V67H18.500z" fill="#459fe0" />
    <path d="M36 51.500h15V67H36z" fill="#f2b53f" />
    <path d="M28 1h14v12h9L35 31 19 13h9z" fill="#67b357" />
  </svg>
);
const Mongo = () => (
  <Tile fill="#fff">
    <path d="M35 12c6 7 11 13 11 23 0 8-4 13-9.500 17L36 58h-2l-.5-6C28 48 24 43 24 35c0-10 5-16 11-23z" fill="#2b6a4b" />
    <path d="M35 27v28" stroke="#c9ddd0" strokeWidth="1.800" />
  </Tile>
);
const Trash = () => (
  <svg width="64" height="84" viewBox="0 0 64 84" className="-mt-[10px]">
    <defs>
      <linearGradient id="tr" x1="0" y1="0" x2="1" y2="0">
        <stop offset="0" stopColor="#6d7072" />
        <stop offset=".3" stopColor="#9a9da0" />
        <stop offset=".6" stopColor="#77797c" />
        <stop offset="1" stopColor="#56595b" />
      </linearGradient>
    </defs>
    <path d="M6 14l8-9 8 4 8-6 8 5 9-5 4 7 7 6-2 8H8z" fill="#dfe1e2" />
    <path d="M16 8l6 8 7-9M38 10l6 8 8-8M24 18l8-7 6 8" fill="none" stroke="#75797d" strokeWidth="2.500" />
    <path d="M22 12l6 2-4 3zM40 12l4 2-5 4z" fill="#3fa6c4" />
    <path d="M2 14c10 9 50 9 60 0l-7 62c-1 8-45 8-46 0z" fill="url(#tr)" />
    <path d="M2 14c10 9 50 9 60 0" fill="none" stroke="#b9bcbe" strokeWidth="1.400" />
  </svg>
);

const dock = [
  [Finder, 1], [Launchpad], [Safari], [Messages, 0, "2"], [MailApp], [FaceTime], [CalendarApp], [Reminders], [Notes], [Music], [AppStore],
  [SettingsApp, 0, "1"], [Teams, 1], [WhatsApp], [Chrome, 1], [OpenVpn], [Slack], [Outlook, 1], [Cursor, 1], [IPhone], [MySql], [Claude],
  null, [Excel, 1], [Preview], [Installer, 1, "1"], [Mongo, 1], null, [Trash],
];

function Dock() {
  return (
    <div className="ml-[178px] flex h-[108px] w-[2524px] rounded-[36px] border-2 border-[#3b3b3b] bg-[#141414] pl-[4px]">
      {dock.map((d, i) => {
        if (!d) return <span key={i} className="mx-[20px] mt-[12px] h-[80px] w-[2px] shrink-0 bg-[#4b4b4b]" />;
        const [Icon, running, badge] = d;
        return (
          <div key={i} className="relative flex h-[98px] w-[90px] shrink-0 items-center justify-center">
            <Icon />
            {badge && (
              <span className="absolute top-[5px] right-[1px] flex size-[34px] items-center justify-center rounded-full bg-[#dd4b3b] text-[20px] text-white">{badge}</span>
            )}
            {running ? <span className="absolute bottom-0 left-[40px] size-[8px] translate-y-[2px] rounded-full bg-[#9a9a9a]" /> : null}
          </div>
        );
      })}
    </div>
  );
}

export default function App() {
  return (
    <div className="flex h-[1800px] w-[2880px] flex-col overflow-hidden bg-black font-['Inter',sans-serif]">
      <MenuBar />
      <div className="relative flex h-[1630px] shrink-0 flex-col overflow-hidden rounded-[22px] bg-[#231c2b]">
        <TabStrip />
        <Toolbar />
        <div className="flex h-[1456px] overflow-hidden">
          <Sidebar />
          <Main />
        </div>
        <Toast />
        <div className="pointer-events-none absolute inset-x-[110px] bottom-0 h-[110px] bg-linear-to-t from-black/13 to-transparent [mask-image:linear-gradient(to_right,transparent,black_12%,black_88%,transparent)]" />
      </div>
      <div className="relative h-[120px] pt-[2px]">
        <span className="absolute top-[112px] left-[92px] h-[5px] w-[100px] origin-left -rotate-[19deg] bg-linear-to-r from-transparent via-[#6b3f1c] to-[#e0884a] blur-[1.500px]" />
        <div className="relative"><Dock /></div>
      </div>
    </div>
  );
}
